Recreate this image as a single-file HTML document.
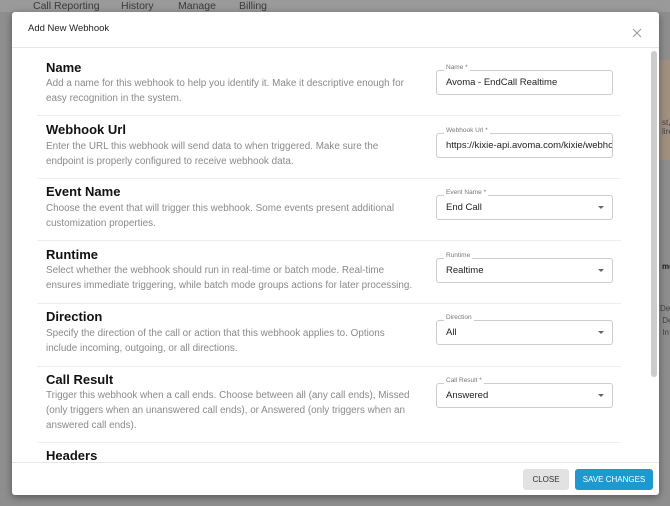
<!DOCTYPE html><html><head><style>
body{margin:0;width:670px;height:506px;overflow:hidden;background:#8e8e8e;font-family:"Liberation Sans",sans-serif;position:relative}
.a{position:absolute}
.tab{top:0;font-size:10.5px;color:#3a3a3a}
.modal{left:12px;top:12px;width:647px;height:483px;background:#fff;border-radius:3px;box-shadow:0 2px 8px rgba(0,0,0,.4);overflow:hidden}
.t{left:34px;font-size:13px;font-weight:bold;color:#111}
.d{left:34px;width:372px;font-size:9.9px;line-height:15px;color:#8a8a8a}
.sep{left:25px;width:584px;height:1px;background:#eee}
.in{left:424px;width:177px;height:25px;border:1px solid #ccc;border-radius:3px;font-size:9.5px;color:#222;line-height:23px;padding-left:9px;box-sizing:border-box;white-space:nowrap;overflow:hidden}
.lab{font-size:6.5px;color:#777;background:#fff;padding:0 2px;left:432px;line-height:8px}
.ar{right:8px;top:10px;width:0;height:0;border-left:3px solid transparent;border-right:3px solid transparent;border-top:3px solid #666}
</style></head><body>
<div class="a" style="left:0;top:0;width:670px;height:12px;background:#9a9a9a"></div>
<div class="a tab" style="left:33px">Call Reporting</div>
<div class="a tab" style="left:121px">History</div>
<div class="a tab" style="left:178px">Manage</div>
<div class="a tab" style="left:239px">Billing</div>
<div class="a" style="left:659px;top:60px;width:11px;height:100px;background:#a09080"></div>
<div class="a" style="left:662px;top:118px;font-size:8px;color:#444">st,<br>lire</div>
<div class="a" style="left:662px;top:262px;font-size:8px;color:#222;font-weight:bold">me</div>
<div class="a" style="left:660px;top:303px;font-size:8px;color:#444;line-height:12px">De<br>&nbsp;De<br>&nbsp;In</div>
<div class="a modal">
<div class="a" style="left:16px;top:11px;font-size:9.5px;color:#222">Add New Webhook</div>
<svg class="a" style="left:620px;top:16px" width="10" height="10"><path d="M1 1L9 9M9 1L1 9" stroke="#999" stroke-width="1"/></svg>
<div class="a" style="left:0;top:35px;width:647px;height:1px;background:#e6e6e6"></div>
<div class="a" style="left:639px;top:39px;width:6px;height:326px;border-radius:3px;background:#ccc"></div>

<div class="a t" style="top:48px">Name</div>
<div class="a d" style="top:64px">Add a name for this webhook to help you identify it. Make it descriptive enough for easy recognition in the system.</div>
<div class="a sep" style="top:103px"></div>
<div class="a t" style="top:110px">Webhook Url</div>
<div class="a d" style="top:127px">Enter the URL this webhook will send data to when triggered. Make sure the endpoint is properly configured to receive webhook data.</div>
<div class="a sep" style="top:166px"></div>
<div class="a t" style="top:172px">Event Name</div>
<div class="a d" style="top:189px">Choose the event that will trigger this webhook. Some events present additional customization properties.</div>
<div class="a sep" style="top:228px"></div>
<div class="a t" style="top:235px">Runtime</div>
<div class="a d" style="top:251px">Select whether the webhook should run in real-time or batch mode. Real-time ensures immediate triggering, while batch mode groups actions for later processing.</div>
<div class="a sep" style="top:291px"></div>
<div class="a t" style="top:297px">Direction</div>
<div class="a d" style="top:314px">Specify the direction of the call or action that this webhook applies to. Options include incoming, outgoing, or all directions.</div>
<div class="a sep" style="top:354px"></div>
<div class="a t" style="top:360px">Call Result</div>
<div class="a d" style="top:376px">Trigger this webhook when a call ends. Choose between all (any call ends), Missed (only triggers when an unanswered call ends), or Answered (only triggers when an answered call ends).</div>
<div class="a sep" style="top:430px"></div>
<div class="a t" style="top:436px">Headers</div>

<div class="a in" style="top:58px">Avoma - EndCall Realtime</div>
<div class="a lab" style="top:52px">Name *</div>
<div class="a in" style="top:121px">https://kixie-api.avoma.com/kixie/webhook</div>
<div class="a lab" style="top:115px">Webhook Url *</div>
<div class="a in" style="top:183px">End Call<div class="a ar"></div></div>
<div class="a lab" style="top:177px">Event Name *</div>
<div class="a in" style="top:246px">Realtime<div class="a ar"></div></div>
<div class="a lab" style="top:240px">Runtime</div>
<div class="a in" style="top:308px">All<div class="a ar"></div></div>
<div class="a lab" style="top:302px">Direction</div>
<div class="a in" style="top:371px">Answered<div class="a ar"></div></div>
<div class="a lab" style="top:365px">Call Result *</div>

<div class="a" style="left:0;top:450px;width:647px;height:1px;background:#e6e6e6"></div>
<div class="a" style="left:511px;top:457px;width:46px;height:21px;background:#e2e2e2;border-radius:3px;font-size:8px;color:#333;text-align:center;line-height:21px">CLOSE</div>
<div class="a" style="left:563px;top:457px;width:78px;height:21px;background:#1a9ad0;border-radius:3px;font-size:8px;color:#fff;text-align:center;line-height:21px">SAVE CHANGES</div>
</div>
</body></html>
